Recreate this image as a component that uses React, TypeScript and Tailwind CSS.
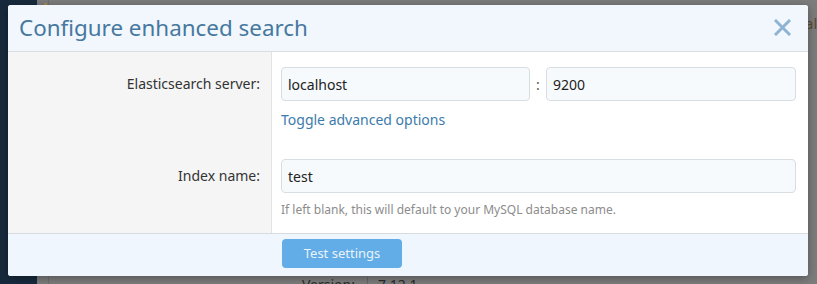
import React from "react";

export default function App() {
  const font = { fontFamily: '"Noto Sans", "Open Sans", Arial, sans-serif' };
  return (
    <div className="relative w-[817px] h-[284px] overflow-hidden" style={font}>
      {/* backdrop page */}
      <div className="absolute inset-0 flex">
        <div className="w-[37px] bg-[#172a3d]" />
        <div className="flex-1 bg-[#7c7c7c] relative">
          <div className="absolute left-[11px] top-0 bottom-0 w-px bg-[#6f6f6f]" />
          <div className="absolute left-[768px] top-[12px] text-[15px] text-[#5a4a35]">al</div>
          <div className="absolute left-[7px] top-[3px] w-[3px] h-[5px] bg-[#a88a4a]" />
          <div className="absolute left-[265px] top-[274px] text-[14px] text-[#2a2a2a] flex items-center">
            <span>Version:</span>
            <span className="ml-[12px] w-px h-[16px] bg-[#666]" />
            <span className="ml-[10px]">7.12.1</span>
          </div>
        </div>
      </div>

      {/* dialog */}
      <div className="absolute left-[8px] top-[5px] w-[800px] h-[271px] rounded-[3px] overflow-hidden bg-white shadow-[0_2px_8px_rgba(0,0,0,0.35)] flex flex-col">
        <div className="h-[47px] shrink-0 bg-[#f1f7fc] border-b border-[#d9dee3] flex items-center justify-between pl-[11px] pr-[17px]">
          <h1 className="text-[22.4px] leading-none text-[#47789f]" style={{ fontWeight: 400 }}>
            Configure enhanced search
          </h1>
          <svg width="17" height="17" viewBox="0 0 17 17" className="mb-[1px]">
            <path d="M2 2 L15 15 M15 2 L2 15" stroke="#8fb3d2" strokeWidth="3" strokeLinecap="square" />
          </svg>
        </div>

        <div className="flex flex-col">
          {/* row 1 */}
          <div className="flex">
            <div className="w-[264px] shrink-0 bg-[#f5f5f5] border-r border-[#e3e3e3] pt-[15px] pr-[11px] text-right text-[14px] leading-[34px] text-[#333]">
              Elasticsearch server:
            </div>
            <div className="flex-1 pl-[9px] pr-[12px] pt-[15px] pb-[14px]">
              <div className="flex items-center">
                <div className="w-[249px] h-[34px] rounded-[4px] border border-[#d8dde2] bg-[#f7fafd] px-[6px] flex items-center text-[14px] text-[#222]">
                  localhost
                </div>
                <div className="w-[16px] text-center text-[14px] text-[#555]">:</div>
                <div className="flex-1 h-[34px] rounded-[4px] border border-[#d8dde2] bg-[#f7fafd] px-[6px] flex items-center text-[14px] text-[#222]">
                  9200
                </div>
              </div>
              <div className="mt-[9px] text-[14px] leading-[20px] text-[#3c7bab]">Toggle advanced options</div>
            </div>
          </div>
          {/* row 2 */}
          <div className="flex">
            <div className="w-[264px] shrink-0 bg-[#f5f5f5] border-r border-[#e3e3e3] pt-[15px] pr-[11px] text-right text-[14px] leading-[34px] text-[#333]">
              Index name:
            </div>
            <div className="flex-1 pl-[9px] pr-[12px] pt-[15px] pb-[14px]">
              <div className="h-[34px] rounded-[4px] border border-[#d8dde2] bg-[#f7fafd] px-[6px] flex items-center text-[14px] text-[#222]">
                test
              </div>
              <div className="mt-[8px] text-[12px] leading-[18px] text-[#8c8c8c]">
                If left blank, this will default to your MySQL database name.
              </div>
            </div>
          </div>
        </div>

        <div className="flex-1 bg-[#eff6fd] border-t border-[#d6dbe0] pl-[274px] pt-[5px]">
          <div className="w-[120px] h-[29px] rounded-[4px] bg-[#62ace7] text-[#e9f3fc] text-[13px] flex items-center justify-center">
            Test settings
          </div>
        </div>
      </div>
    </div>
  );
}
